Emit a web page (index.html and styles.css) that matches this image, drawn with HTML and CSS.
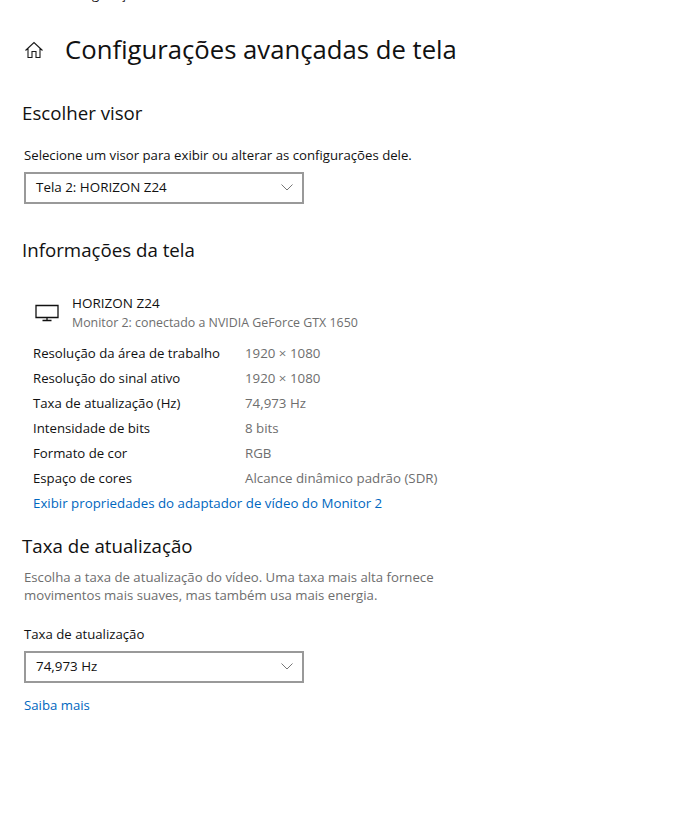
FILE: index.html
```html
<!DOCTYPE html>
<html lang="pt-BR">
  <head>
    <meta charset="UTF-8" />
    <title>Configurações avançadas de tela</title>
    <link rel="stylesheet" href="styles.css">
  </head>
  <body>
    <div class="settings-page">
      <!-- Previous page title, scrolled nearly out of view -->
      <div class="scrolled-off"><span>Configurações</span></div>

      <div class="page-header">
        <svg class="home-icon" width="20" height="20" viewBox="0 0 20 20" fill="none" stroke="#1a1a1a" stroke-width="1.1">
          <path d="M1.500 10.500 10 2.500l8.500 8M4 8.500V17.500H8V11.500H12V17.500H16V8.500" />
        </svg>
        <h1>Configurações avançadas de tela</h1>
      </div>

      <h2 class="section-title">Escolher visor</h2>
      <p class="field-label">Selecione um visor para exibir ou alterar as configurações dele.</p>
      <div class="select-box">
        <span>Tela 2: HORIZON Z24</span>
        <svg class="chevron" width="12" height="7" viewBox="0 0 12 7" fill="none" stroke="#777" stroke-width="1">
          <path d="M.5.500 6 6 11.500.500" />
        </svg>
      </div>

      <h2 class="section-title info-title">Informações da tela</h2>
      <div class="monitor">
        <svg class="monitor-icon" width="24" height="18" viewBox="0 0 24 18" fill="none" stroke="#111" stroke-width="1.3">
          <path d="M1 1.500H23V13.500H1zM12 13.500V16.500M7.500 16.500H16.500" />
        </svg>
        <div class="monitor-text">
          <div class="monitor-name">HORIZON Z24</div>
          <div class="monitor-desc">Monitor 2: conectado a NVIDIA GeForce GTX 1650</div>
        </div>
      </div>

      <div class="info-table">
        <div class="info-row"><span class="info-key">Resolução da área de trabalho</span><span class="info-val">1920 × 1080</span></div>
        <div class="info-row"><span class="info-key">Resolução do sinal ativo</span><span class="info-val">1920 × 1080</span></div>
        <div class="info-row"><span class="info-key">Taxa de atualização (Hz)</span><span class="info-val">74,973 Hz</span></div>
        <div class="info-row"><span class="info-key">Intensidade de bits</span><span class="info-val">8 bits</span></div>
        <div class="info-row"><span class="info-key">Formato de cor</span><span class="info-val">RGB</span></div>
        <div class="info-row"><span class="info-key">Espaço de cores</span><span class="info-val">Alcance dinâmico padrão (SDR)</span></div>
      </div>
      <a class="link adapter-link" href="#">Exibir propriedades do adaptador de vídeo do Monitor 2</a>

      <h2 class="section-title rate-title">Taxa de atualização</h2>
      <p class="rate-desc">Escolha a taxa de atualização do vídeo. Uma taxa mais alta fornece movimentos mais suaves, mas também usa mais energia.</p>
      <p class="field-label rate-label">Taxa de atualização</p>
      <div class="select-box">
        <span>74,973 Hz</span>
        <svg class="chevron" width="12" height="7" viewBox="0 0 12 7" fill="none" stroke="#777" stroke-width="1">
          <path d="M.5.500 6 6 11.500.500" />
        </svg>
      </div>
      <a class="link more-link" href="#">Saiba mais</a>
    </div>
  </body>
</html>
```

FILE: styles.css
```css
body {
  margin: 0;
  padding: 0;
  background: white;
  color: #111;
  font-family: "Open Sans", "Noto Sans", sans-serif;
  font-size: 13.2px;
}

.settings-page {
  display: flex;
  flex-direction: column;
  align-items: flex-start;
  padding-left: 24px;
  height: 814px;
  overflow: hidden;
}

.scrolled-off {
  height: 3px;
  overflow: hidden;
  margin-left: 36px;
  line-height: 3px;
}

/* only the descenders stay visible */
.scrolled-off span {
  display: block;
  margin-top: -15px;
  line-height: 18px;
}

.page-header {
  display: flex;
  align-items: center;
  gap: 22px;
  margin-top: 30px;
  height: 34px;
}

.home-icon {
  flex: none;
}

.page-header h1 {
  margin: 0;
  margin-left: -1px;
  font-size: 25.7px;
  font-weight: 400;
  line-height: 34px;
}

.section-title {
  margin: 0;
  margin-left: -2px;
  font-size: 18.7px;
  font-weight: 400;
  line-height: 26px;
}

.page-header + .section-title {
  margin-top: 33px;
}

.field-label {
  margin: 0;
  margin-top: 19px;
  line-height: 20px;
}

.select-box {
  display: flex;
  align-items: center;
  justify-content: space-between;
  box-sizing: border-box;
  width: 280px;
  height: 32px;
  margin-top: 7px;
  padding: 0 9px 2px 10px;
  border: 2px solid #999;
  font-size: 13.4px;
}

.info-title {
  margin-top: 33px;
}

.monitor {
  display: flex;
  align-items: center;
  gap: 13px;
  margin-top: 30px;
  margin-left: 11px;
}

.monitor-name {
  font-size: 13.5px;
  line-height: 20px;
}

.monitor-desc {
  color: #6e6e6e;
  font-size: 12.4px;
  line-height: 20px;
}

.info-table {
  display: flex;
  flex-direction: column;
  margin-top: 7px;
  margin-left: 9px;
}

.info-row {
  display: flex;
  height: 25px;
  align-items: center;
}

.info-key {
  width: 212px;
}

.info-val {
  color: #6e6e6e;
  font-size: 13.3px;
}

.link {
  color: #0067c0;
  text-decoration: none;
}

.adapter-link {
  margin-top: 1px;
  margin-left: 9px;
  font-size: 13.3px;
  line-height: 25px;
}

.rate-title {
  margin-top: 17px;
}

.rate-desc {
  width: 440px;
  margin: 9px 0 0;
  color: #6e6e6e;
  line-height: 18px;
}

.rate-label {
  margin-top: 20px;
}

.more-link {
  margin-top: 12px;
  line-height: 20px;
}
```
